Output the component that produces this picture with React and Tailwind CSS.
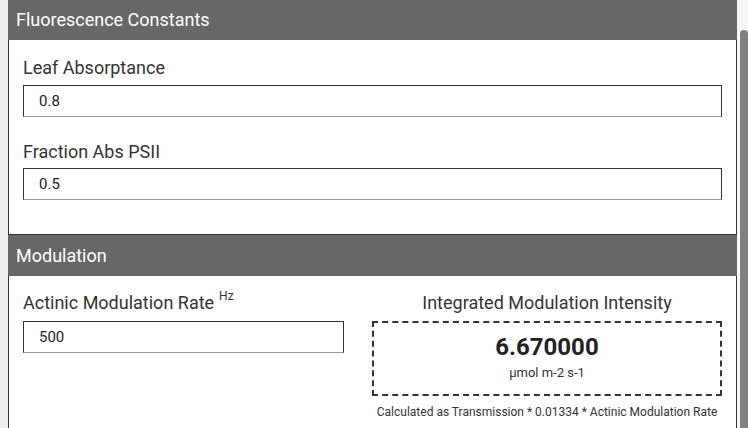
export default function App() {
  const font = { fontFamily: "Roboto, 'Liberation Sans', sans-serif" };
  return (
    <div className="flex w-[748px] h-[428px] overflow-hidden bg-white" style={font}>
      <div className="w-[8px] shrink-0 bg-[#eeeeee]" />
      <div className="w-[729px] shrink-0 flex flex-col">
        {/* Section 1 */}
        <div className="h-[40px] bg-[#676767] text-white text-[18px] leading-[40px] pl-[8px]">
          Fluorescence Constants
        </div>
        <div className="border-x border-b border-[#333333] bg-white pt-[16px] pb-[34px] px-[14px] flex flex-col gap-[23px]">
          <div className="flex flex-col">
            <label className="text-[18px] leading-[24px] text-[#333333] mb-[5px]">Leaf Absorptance</label>
            <div className="h-[32px] w-[699px] border border-[#333333] border-b-[#999999] pl-[15px] flex items-center text-[15px] text-[#222222]">0.8</div>
          </div>
          <div className="flex flex-col">
            <label className="text-[18px] leading-[24px] text-[#333333] mb-[4px]">Fraction Abs PSII</label>
            <div className="h-[32px] w-[699px] border border-[#333333] border-b-[#999999] pl-[15px] flex items-center text-[15px] text-[#222222]">0.5</div>
          </div>
        </div>
        {/* Section 2 */}
        <div className="h-[41px] bg-[#676767] text-white text-[18px] leading-[41px] pl-[8px]">
          Modulation
        </div>
        <div className="flex-1 border-x border-[#333333] bg-white pt-[15px] px-[14px] flex gap-[28px]">
          <div className="w-[321px] flex flex-col">
            <label className="text-[18px] leading-[24px] text-[#333333] mb-[6px] flex items-start">
              <span>Actinic Modulation Rate</span>
              <span className="text-[12px] leading-[12px] ml-[5px] -mt-[1px]">Hz</span>
            </label>
            <div className="h-[32px] w-[321px] border border-[#333333] border-b-[#999999] pl-[15px] flex items-center text-[15px] text-[#222222]">500</div>
          </div>
          <div className="w-[350px] flex flex-col items-center">
            <div className="text-[18px] leading-[24px] text-[#333333] mb-[6px]">Integrated Modulation Intensity</div>
            <div className="w-[350px] h-[75px] border-2 border-dashed border-[#333333] flex flex-col items-center pt-[9px]">
              <div className="text-[24px] leading-[30px] font-bold text-[#222222]">6.670000</div>
              <div className="text-[13px] leading-[16px] mt-[3px] text-[#333333]">µmol m-2 s-1</div>
            </div>
            <div className="text-[12px] leading-[14px] mt-[9px] text-[#333333]">
              Calculated as Transmission * 0.01334 * Actinic Modulation Rate
            </div>
          </div>
        </div>
      </div>
      <div className="w-[11px] shrink-0 bg-[#f7f7f7] relative">
        <div className="absolute left-[3px] right-0 top-[30px] bottom-0 bg-[#808080] rounded-t-[4px]" />
      </div>
    </div>
  );
}
